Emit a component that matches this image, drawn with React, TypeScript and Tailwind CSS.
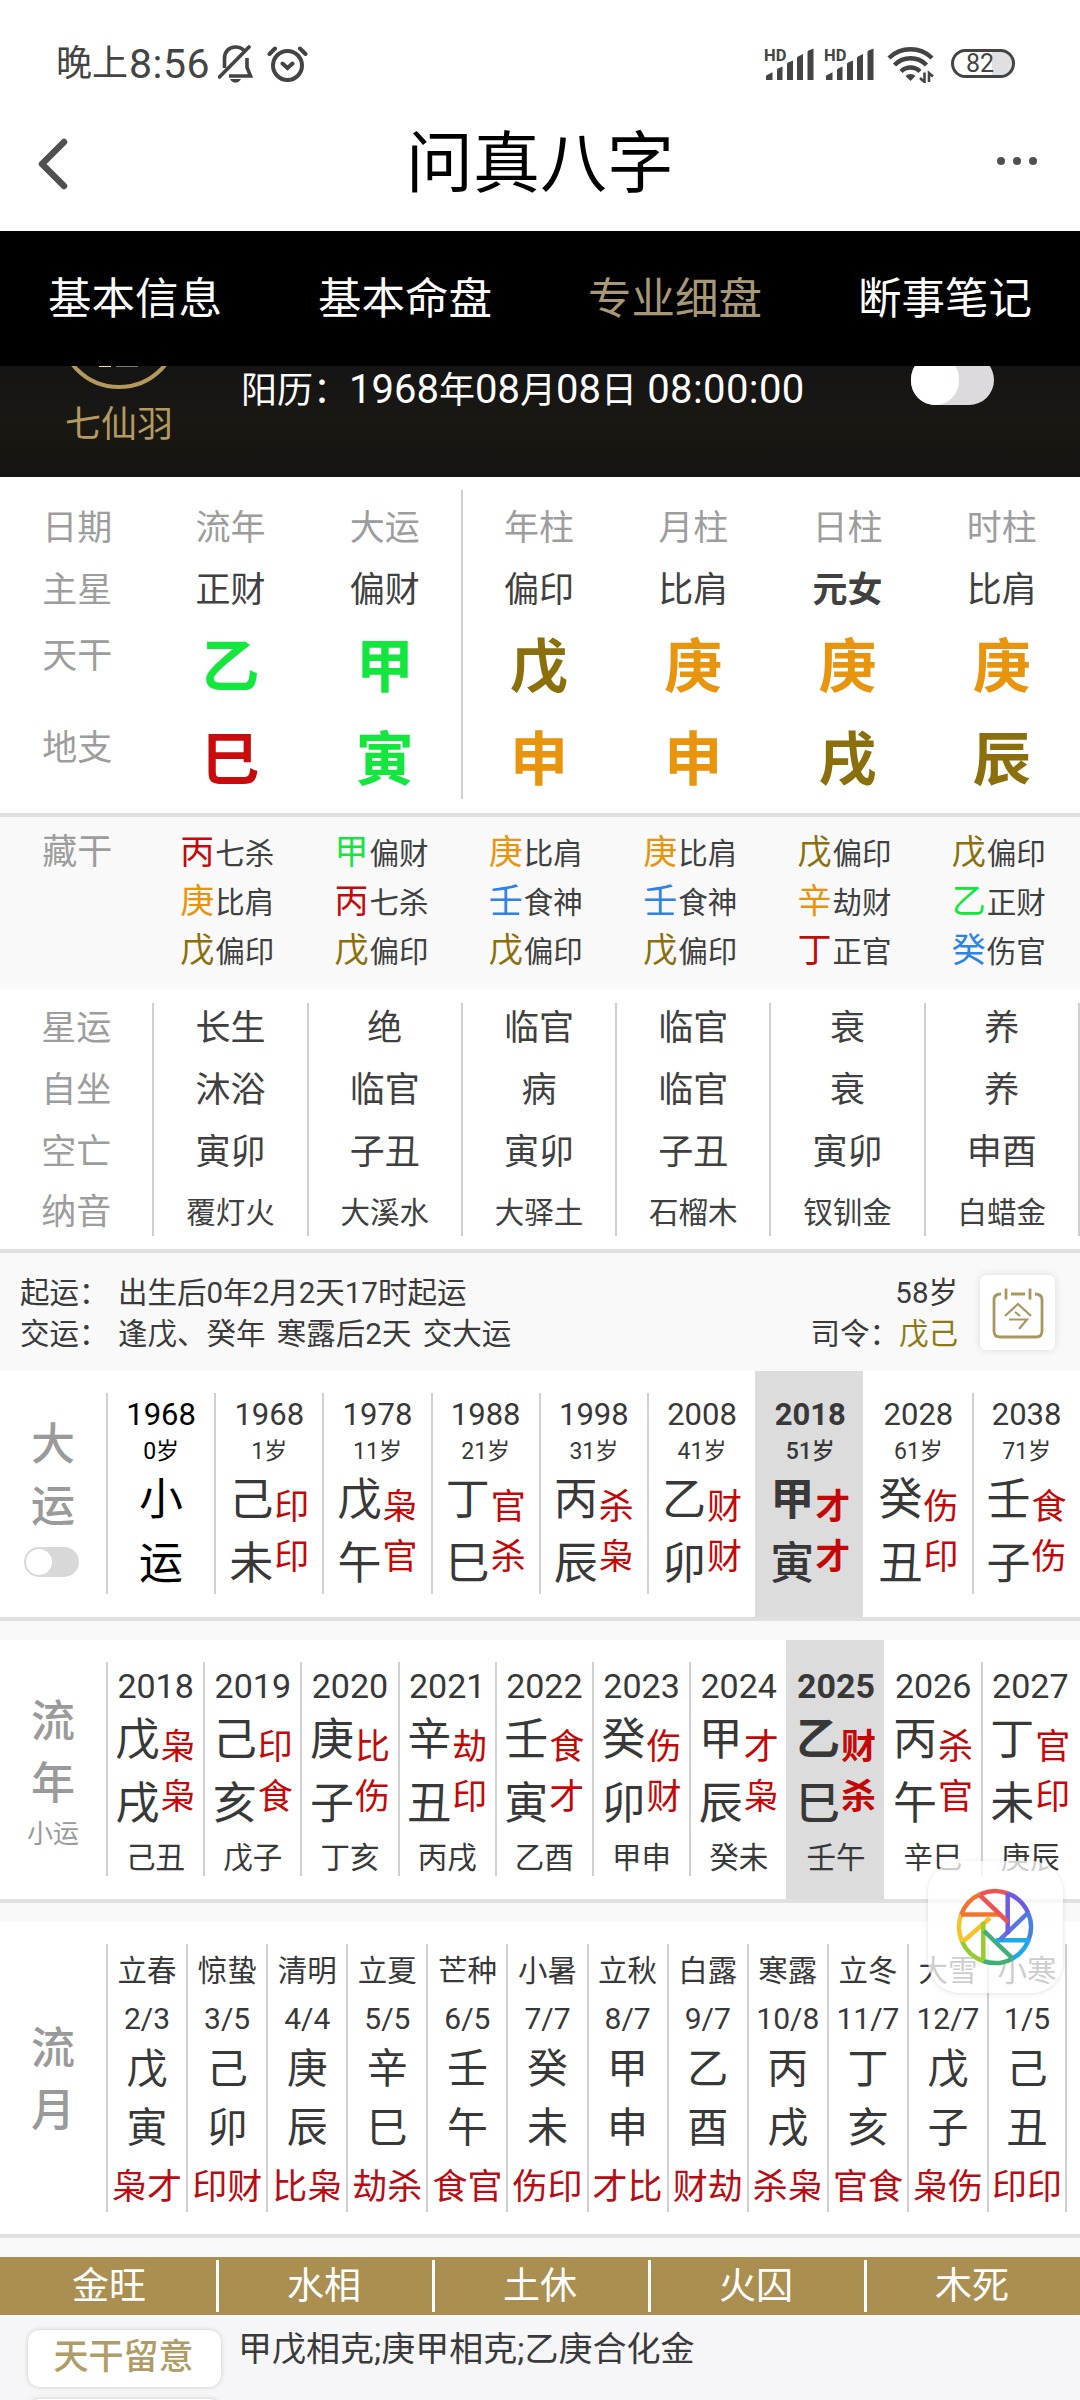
import { clsx } from 'clsx';
import type { ReactNode } from 'react';

// Colour of each heavenly stem / earthly branch by its element
const ELEMENT: Record<string, string> = {
  甲: 'text-[#13e73d]',
  乙: 'text-[#13e73d]',
  寅: 'text-[#13e73d]',
  丙: 'text-[#c40a0a]',
  丁: 'text-[#c40a0a]',
  巳: 'text-[#c90b0b]',
  戊: 'text-[#8b6f0c]',
  戌: 'text-[#8b6f0c]',
  辰: 'text-[#8b6f0c]',
  庚: 'text-[#e8940c]',
  辛: 'text-[#e8940c]',
  申: 'text-[#e8940c]',
  壬: 'text-[#2e83e6]',
  癸: 'text-[#2e83e6]',
};

const TABS = ['基本信息', '基本命盘', '专业细盘', '断事笔记'];

const PILLARS = [
  { title: '流年', star: '正财', stem: '乙', branch: '巳' },
  { title: '大运', star: '偏财', stem: '甲', branch: '寅' },
  { title: '年柱', star: '偏印', stem: '戊', branch: '申' },
  { title: '月柱', star: '比肩', stem: '庚', branch: '申' },
  { title: '日柱', star: '元女', stem: '庚', branch: '戌' },
  { title: '时柱', star: '比肩', stem: '庚', branch: '辰' },
];

const HIDDEN = [
  ['丙七杀', '庚比肩', '戊偏印'],
  ['甲偏财', '丙七杀', '戊偏印'],
  ['庚比肩', '壬食神', '戊偏印'],
  ['庚比肩', '壬食神', '戊偏印'],
  ['戊偏印', '辛劫财', '丁正官'],
  ['戊偏印', '乙正财', '癸伤官'],
];

const DETAILS = [
  ['长生', '沐浴', '寅卯', '覆灯火'],
  ['绝', '临官', '子丑', '大溪水'],
  ['临官', '病', '寅卯', '大驿土'],
  ['临官', '临官', '子丑', '石榴木'],
  ['衰', '衰', '寅卯', '钗钏金'],
  ['养', '养', '申酉', '白蜡金'],
];

// year, age, stem + god, branch + god
const DECADES = [
  ['1968', '1岁', '己印', '未印'],
  ['1978', '11岁', '戊枭', '午官'],
  ['1988', '21岁', '丁官', '巳杀'],
  ['1998', '31岁', '丙杀', '辰枭'],
  ['2008', '41岁', '乙财', '卯财'],
  ['2018', '51岁', '甲才', '寅才'],
  ['2028', '61岁', '癸伤', '丑印'],
  ['2038', '71岁', '壬食', '子伤'],
];

const YEARS = [
  ['2018', '戊枭', '戌枭', '己丑'],
  ['2019', '己印', '亥食', '戊子'],
  ['2020', '庚比', '子伤', '丁亥'],
  ['2021', '辛劫', '丑印', '丙戌'],
  ['2022', '壬食', '寅才', '乙酉'],
  ['2023', '癸伤', '卯财', '甲申'],
  ['2024', '甲才', '辰枭', '癸未'],
  ['2025', '乙财', '巳杀', '壬午'],
  ['2026', '丙杀', '午官', '辛巳'],
  ['2027', '丁官', '未印', '庚辰'],
];

const MONTHS = [
  ['立春', '2/3', '戊', '寅', '枭才'],
  ['惊蛰', '3/5', '己', '卯', '印财'],
  ['清明', '4/4', '庚', '辰', '比枭'],
  ['立夏', '5/5', '辛', '巳', '劫杀'],
  ['芒种', '6/5', '壬', '午', '食官'],
  ['小暑', '7/7', '癸', '未', '伤印'],
  ['立秋', '8/7', '甲', '申', '才比'],
  ['白露', '9/7', '乙', '酉', '财劫'],
  ['寒露', '10/8', '丙', '戌', '杀枭'],
  ['立冬', '11/7', '丁', '亥', '官食'],
  ['大雪', '12/7', '戊', '子', '枭伤'],
  ['小寒', '1/5', '己', '丑', '印印'],
];

const SEASONS = ['金旺', '水相', '土休', '火囚', '木死'];

function Signal() {
  return (
    <svg width="52" height="36" viewBox="0 0 52 36" fill="#444">
      <text x="1" y="15" fontSize="16.5" fontWeight="700" fontFamily="Roboto, sans-serif">HD</text>
      <path d="M3 34v-3.500q0-1 1-1.400l5.500-2.800V34zM14 34v-10q0-1 1-1.500l4.500-2V34zM24 34V18q0-1 1-1.500l5-2V34zM34 34V12q0-1 1-1.500l5-2.500V34zM44.500 34V6q0-1 1-1.500l5-2V34z" />
    </svg>
  );
}

function StatusBar() {
  return (
    <div className="flex h-[126px] items-center justify-between pl-[56px] pr-[65px] pt-px text-[#444]">
      <div className="flex items-center">
        <span className="text-[36px] leading-[50px]">晚上</span>
        <span className="ml-px text-[41px] leading-[50px] tracking-[0.500px]">8:56</span>
        <svg className="ml-[8px]" width="36" height="40" viewBox="0 0 36 40" fill="none" stroke="#444" strokeWidth="3.600">
          <path d="M6.500 24V14.500C6.500 7.500 11 3 17.500 3c3.500 0 6.500 1.300 8.500 3.500M29 14v9.500L32.500 32H11" />
          <path d="M1.500 33 31 3" strokeLinecap="round" />
          <path d="M12 35h11c-1.500 2.800-3.200 3.600-5.500 3.600S13.500 37.800 12 35z" fill="#444" stroke="none" />
        </svg>
        <svg className="ml-[13px]" width="42" height="38" viewBox="0 0 42 38" fill="none" stroke="#444" strokeWidth="4" strokeLinecap="round">
          <circle cx="20.500" cy="20.500" r="14.500" />
          <path d="M2.500 9 8 3.500M38.500 9 33 3.500M15.500 18.500l5 4.500 5-4.500" />
        </svg>
      </div>
      <div className="flex items-center">
        <Signal />
        <span className="w-2" />
        <Signal />
        <svg className="ml-[12px]" width="48" height="38" viewBox="0 0 48 38" fill="none" stroke="#444" strokeWidth="4.500">
          <path d="M2 13a31 31 0 0 1 43 0M7.500 20a22.500 22.500 0 0 1 32 0M14 26.500a13.500 13.500 0 0 1 19 0" />
          <path d="M18.500 31a7 7 0 0 1 10 0l-5 5z" fill="#444" stroke="none" />
          <path d="M37.500 27.500V37l-4.500-4M42 37v-9l4 3.500" strokeWidth="2.600" />
        </svg>
        <div className="ml-[16px] flex h-[29px] w-[64px] items-center justify-center rounded-full border-[3px] border-[#444] bg-gradient-to-r from-white from-65% to-[#e0e0e0] to-65% pr-[6px]">
          <span className="text-[25px] leading-none">82</span>
        </div>
      </div>
    </div>
  );
}

function Header() {
  return (
    <div className="flex h-[105px] items-center justify-between pl-[37px] pr-[43px]">
      <svg className="mt-[-30px]" width="32" height="54" viewBox="0 0 32 54" fill="none" stroke="#505050" strokeWidth="6.500" strokeLinecap="round" strokeLinejoin="round">
        <path d="M27 5 5 27l22 22" />
      </svg>
      <h1 className="mt-[-29px] pl-[14px] text-[67px] leading-[80px] text-black">问真八字</h1>
      <div className="mt-[-36px] flex gap-2">
        <i className="size-2 rounded-full bg-[#505050]" />
        <i className="size-2 rounded-full bg-[#505050]" />
        <i className="size-2 rounded-full bg-[#505050]" />
      </div>
    </div>
  );
}

function Banner() {
  return (
    <div className="flex h-[111px] items-start overflow-hidden bg-gradient-to-b from-[#141414] via-[#1a1813] to-[#15130f] text-white">
      <div className="-mt-[99px] flex w-[238px] flex-col items-center">
        <div className="flex size-[122px] items-end justify-center rounded-full border-4 border-[#b39a5c] pb-[16px]">
          <svg width="42" height="6" viewBox="0 0 42 6" fill="none" stroke="#f3e3b0" strokeWidth="2">
            <path d="M1 3h12M18 2.500h22" />
          </svg>
        </div>
        <span className="mt-[14px] text-[36px] leading-[44px] text-[#b39a62]">七仙羽</span>
      </div>
      <div className="flex-1 whitespace-nowrap pl-[3px] pt-[2px] text-[36px] leading-[44px]">
        阳历：<span className="text-[40px]">1968</span>年<span className="text-[40px]">08</span>月<span className="text-[40px]">08</span>日
        <span className="text-[40px] tracking-[0.400px]"> 08:00:00</span>
      </div>
      <div className="-mt-[11px] mr-[86px] h-[50px] w-[83px] rounded-full bg-[#dcdadd]">
        <div className="h-[50px] w-[48px] rounded-full bg-white" />
      </div>
    </div>
  );
}

function PillarColumn({ title, star, stem, branch, last }: { title: string; star: string; stem: string; branch: string; last?: boolean }) {
  return (
    <div className={clsx('flex h-[309px] flex-col items-center border-r-2', last ? 'border-[#cfcfcf]' : 'border-transparent')}>
      <span className="mt-[14px] text-[35px] leading-[50px] text-[#9d9d9d]">{title}</span>
      <span className={clsx('mt-[12px] text-[35px] leading-[50px] text-[#404040]', star === '元女' && 'font-bold')}>{star}</span>
      <span className={clsx('mt-[16px] text-[58px] font-bold leading-[70px]', ELEMENT[stem])}>{stem}</span>
      <span className={clsx('mt-[23px] text-[58px] font-bold leading-[70px]', ELEMENT[branch])}>{branch}</span>
    </div>
  );
}

function Pillars() {
  return (
    <section className="grid h-[336px] grid-cols-7 pt-[13px]">
      <div className="flex flex-col items-center text-[35px] leading-[50px] text-[#9d9d9d]">
        <span className="mt-[14px]">日期</span>
        <span className="mt-[12px]">主星</span>
        <span className="mt-[16px]">天干</span>
        <span className="mt-[42px]">地支</span>
      </div>
      {PILLARS.map((p, i) => (
        <PillarColumn key={p.title} {...p} last={i === 1} />
      ))}
    </section>
  );
}

function HiddenStems() {
  return (
    <section className="grid h-[176px] grid-cols-7 border-t-4 border-[#e0e0e0] bg-[#f9f9f9] pt-[11px]">
      <span className="text-center text-[35px] leading-[49px] text-[#9d9d9d]">藏干</span>
      {HIDDEN.map((rows, i) => (
        <div key={i} className="flex flex-col pl-[26px]">
          {rows.map((row) => (
            <span key={row} className="h-[49px] whitespace-nowrap text-[34px] leading-[49px]">
              <span className={ELEMENT[row[0]]}>{row[0]}</span>
              <span className="ml-px text-[29.500px] leading-none text-[#404040]">{row.slice(1)}</span>
            </span>
          ))}
        </div>
      ))}
    </section>
  );
}

function Details() {
  return (
    <section className="grid h-[260px] grid-cols-7 pt-[14px] text-center leading-[62px]">
      {[['星运', '自坐', '空亡', '纳音'], ...DETAILS].map((col, i) => (
        <div key={i} className="flex h-[233px] flex-col border-r-2 border-[#cfcfcf]">
          <div className={clsx('-mt-[5px] flex flex-col text-[35px]', i === 0 ? 'text-[#9d9d9d]' : 'text-[#404040]')}>
            <span>{col[0]}</span>
            <span>{col[1]}</span>
            <span>{col[2]}</span>
            <span className={clsx('-mt-[2px]', i > 0 && 'text-[29.500px]')}>{col[3]}</span>
          </div>
        </div>
      ))}
    </section>
  );
}

function LuckInfo() {
  return (
    <section className="flex h-[122px] border-t-4 border-[#e0e0e0] bg-[#f9f9f9] pl-5 pt-[20px] text-[29.500px] leading-[41px] text-[#3a3a3a]">
      <div className="w-[98px] whitespace-nowrap">
        <p>起运：</p>
        <p>交运：</p>
      </div>
      <div className="flex-1 whitespace-nowrap">
        <p>出生后0年2月2天17时起运</p>
        <p className="[word-spacing:4px]">逢戊、癸年 寒露后2天 交大运</p>
      </div>
      <div className="mr-[22px] text-right">
        <p>58岁</p>
        <p>
          司令：<span className="text-[#8b7a14]">戊己</span>
        </p>
      </div>
      <div className="mr-[25px] mt-[2px] flex size-[75px] items-center justify-center rounded-md bg-white shadow-[0_0_8px_rgba(0,0,0,0.12)]">
        <svg width="52" height="54" viewBox="0 0 52 54" fill="none" stroke="#aa9760" strokeWidth="2.800">
          <path d="M9 8C4 8 2 10.500 2 14v31q0 6 6 6h36q6 0 6-6V14c0-3.500-2-6-7-6M19 8h14M14 2.500v11M38 2.500v11" />
          <path d="M13 30 26 18l13 12M23 26l5 4M17 33.500h18L27 43" strokeWidth="2.200" />
        </svg>
      </div>
    </section>
  );
}

// Big stem over big branch with the small red gods beside them
function StemBranch({ top, bottom, bold }: { top: string; bottom: string; bold?: boolean }) {
  return (
    <div className={clsx('flex justify-center', bold && 'font-bold')}>
      <div className="flex flex-col text-[44px] leading-[64px]">
        <span>{top[0]}</span>
        <span className={clsx(bold && 'font-medium')}>{bottom[0]}</span>
      </div>
      <div className="ml-px mt-[15px] flex flex-col text-[35px] leading-[50px] text-[#c40808]">
        <span>{top[1]}</span>
        <span>{bottom[1]}</span>
      </div>
    </div>
  );
}

function SideLabel({ text, className, children }: { text: string; className: string; children?: ReactNode }) {
  return (
    <div className={clsx('flex w-[106px] shrink-0 flex-col items-center text-[#9a9a9a]', className)}>
      {[...text].map((c) => (
        <span key={c} className="text-[44px] font-medium leading-[62px]">{c}</span>
      ))}
      {children}
    </div>
  );
}

function DecadeLuck() {
  return (
    <section className="flex h-[246px] text-[#383838]">
      <SideLabel text="大运" className="pt-[43px]">
        <div className="mr-1 mt-[9px] h-[30px] w-[55px] rounded-full bg-[#d8d8d8] p-[2px]">
          <div className="size-[26px] rounded-full bg-white" />
        </div>
      </SideLabel>
      <div className="mt-[22px] flex h-[201px] w-[108.200px] flex-col items-center border-l-2 border-[#d0d0d0] text-black">
        <span className="mt-px text-[31px] leading-[42px]">1968</span>
        <span className="text-[23px] leading-[32px]">0岁</span>
        <span className="text-[44px] leading-[64px]">小</span>
        <span className="text-[44px] leading-[64px]">运</span>
      </div>
      {DECADES.map(([year, age, top, bottom]) => {
        const active = year === '2018';
        return (
          <div key={year} className={clsx('w-[108.200px]', active && 'bg-[#dcdcdc] font-bold')}>
            <div className={clsx('mt-[22px] flex h-[201px] flex-col items-center border-l-2', active || year === '2028' ? 'border-transparent' : 'border-[#d0d0d0]')}>
              <span className="mt-px text-[31px] leading-[42px]">{year}</span>
              <span className={clsx('text-[23px] leading-[32px]', active && 'font-medium')}>{age}</span>
              <StemBranch top={top} bottom={bottom} bold={active} />
            </div>
          </div>
        );
      })}
    </section>
  );
}

function YearLuck() {
  return (
    <section className="mt-[19px] flex h-[259px] bg-white text-[#383838]">
      <SideLabel text="流年" className="pt-[51px]">
        <span className="mt-px text-[26px] leading-[36px]">小运</span>
      </SideLabel>
      {YEARS.map(([year, top, bottom, minor]) => {
        const active = year === '2025';
        return (
          <div key={year} className={clsx('w-[97.200px]', active && 'bg-[#dcdcdc]')}>
            <div className={clsx('mt-[22px] flex h-[214px] flex-col items-center border-l-2', active || year === '2026' ? 'border-transparent' : 'border-[#d0d0d0]')}>
              <span className={clsx('mt-[2px] text-[34px] leading-[44px]', active && 'font-bold')}>{year}</span>
              <StemBranch top={top} bottom={bottom} bold={active} />
              <span className="mt-[2px] text-[29.500px] leading-[40px]">{minor}</span>
            </div>
          </div>
        );
      })}
    </section>
  );
}

function MonthLuck() {
  return (
    <section className="mt-[19px] flex h-[312px] bg-white text-[#383838]">
      <SideLabel text="流月" className="pt-[96px]" />
      {MONTHS.map(([term, date, stem, branch, gods], i) => (
        <div
          key={term}
          className={clsx('mt-[22px] flex h-[268px] w-[80.100px] shrink-0 flex-col items-center whitespace-nowrap border-l-2 border-[#d0d0d0]', i === 11 && 'border-r-2')}
        >
          <span className="mt-[2px] text-[29.500px] leading-[50px]">{term}</span>
          <span className="text-[30px] leading-[46px]">{date}</span>
          <span className="-mt-[2px] text-[41px] leading-[58px]">{stem}</span>
          <span className="text-[41px] leading-[60px]">{branch}</span>
          <span className="text-[35px] leading-[60px] text-[#b80d14]">{gods}</span>
        </div>
      ))}
    </section>
  );
}

function FloatingButton() {
  return (
    <div className="absolute left-[928px] top-[1861px] flex h-[132px] w-[135px] items-center justify-center rounded-[32px] bg-white/75 pr-[2px] shadow-[0_1px_5px_rgba(0,0,0,0.12)]">
      <svg width="78" height="78" viewBox="0 0 78 78" fill="none" strokeWidth="4.500">
        <path stroke="#ee5350" d="M24 6.300A36 36 0 0 1 51.700 5.300" />
        <path stroke="#6f5be0" d="M51.700 5.300A36 36 0 0 1 72.200 25" />
        <path stroke="#4a7fe0" d="M72.200 25A36 36 0 0 1 72.400 52.300" />
        <path stroke="#1fa9ea" d="M72.400 52.300A36 36 0 0 1 55.700 70.900" />
        <path stroke="#41ae75" d="M55.700 70.900A36 36 0 0 1 27.300 73" />
        <path stroke="#97cc2f" d="M27.300 73A36 36 0 0 1 6 53.300" />
        <path stroke="#f8c22b" d="M6 53.300A36 36 0 0 1 5.200 26.600" />
        <path stroke="#f0762f" d="M5.200 26.600A36 36 0 0 1 24 6.300" />
        <path stroke="#f0762f" d="M5 26.600h38" />
        <path stroke="#f8c22b" d="M7.300 53.300 34 30" />
        <path stroke="#97cc2f" d="M27.300 72V34" />
        <path stroke="#41ae75" d="M55.700 69.600 28 43" />
        <path stroke="#1fa9ea" d="M73 52.300H40" />
        <path stroke="#5577e0" d="M71.700 25 44 51.700" />
        <path stroke="#6f5be0" d="M51.700 5v41" />
        <path stroke="#ee5350" d="M24 7.300 52 34" />
      </svg>
    </div>
  );
}

export default function App() {
  return (
    <div className="relative flex h-[2400px] w-[1080px] flex-col overflow-hidden bg-white font-['Roboto','Noto_Sans_CJK_SC',sans-serif] [&>*]:shrink-0">
      <StatusBar />
      <Header />
      <nav className="grid h-[135px] grid-cols-4 bg-black text-center text-[43.500px] leading-[137px] text-white">
        {TABS.map((tab) => (
          <span key={tab} className={clsx(tab === '专业细盘' && 'text-[#a89878]')}>{tab}</span>
        ))}
      </nav>
      <Banner />
      <Pillars />
      <HiddenStems />
      <Details />
      <LuckInfo />
      <DecadeLuck />
      <div className="border-t-4 border-[#e0e0e0] bg-[#f9f9f9]">
        <YearLuck />
      </div>
      <div className="border-t-4 border-[#e0e0e0] bg-[#f9f9f9]">
        <MonthLuck />
      </div>
      <div className="h-[23px] border-t-4 border-[#e0e0e0] bg-[#f9f9f9]" />
      <div className="grid h-[58px] grid-cols-5 bg-[#ab8f50] py-[3px] text-center text-[37px] leading-[54px] text-white">
        {SEASONS.map((s, i) => (
          <span key={s} className={clsx('h-[52px]', i > 0 ? 'border-l-[3px] border-white pr-[3px]' : 'pl-[2px]')}>{s}</span>
        ))}
      </div>
      <div className="flex h-[85px] items-start overflow-hidden bg-[#f6f6f8] pl-7">
        <div className="mt-[15px]">
          <div className="h-[57px] w-[193px] rounded-xl bg-white pr-[2px] text-center text-[35px] font-medium leading-[55px] text-[#b09c66] shadow-[0_0_5px_rgba(0,0,0,0.18)]">天干留意</div>
          <div className="mt-[12px] h-[57px] w-[193px] rounded-xl bg-white shadow-[0_0_5px_rgba(0,0,0,0.18)]" />
        </div>
        <p className="ml-[17px] mt-[9px] text-[34px] leading-[50px] text-[#3a3a3a]">甲戊相克;庚甲相克;乙庚合化金</p>
      </div>
      <FloatingButton />
    </div>
  );
}
